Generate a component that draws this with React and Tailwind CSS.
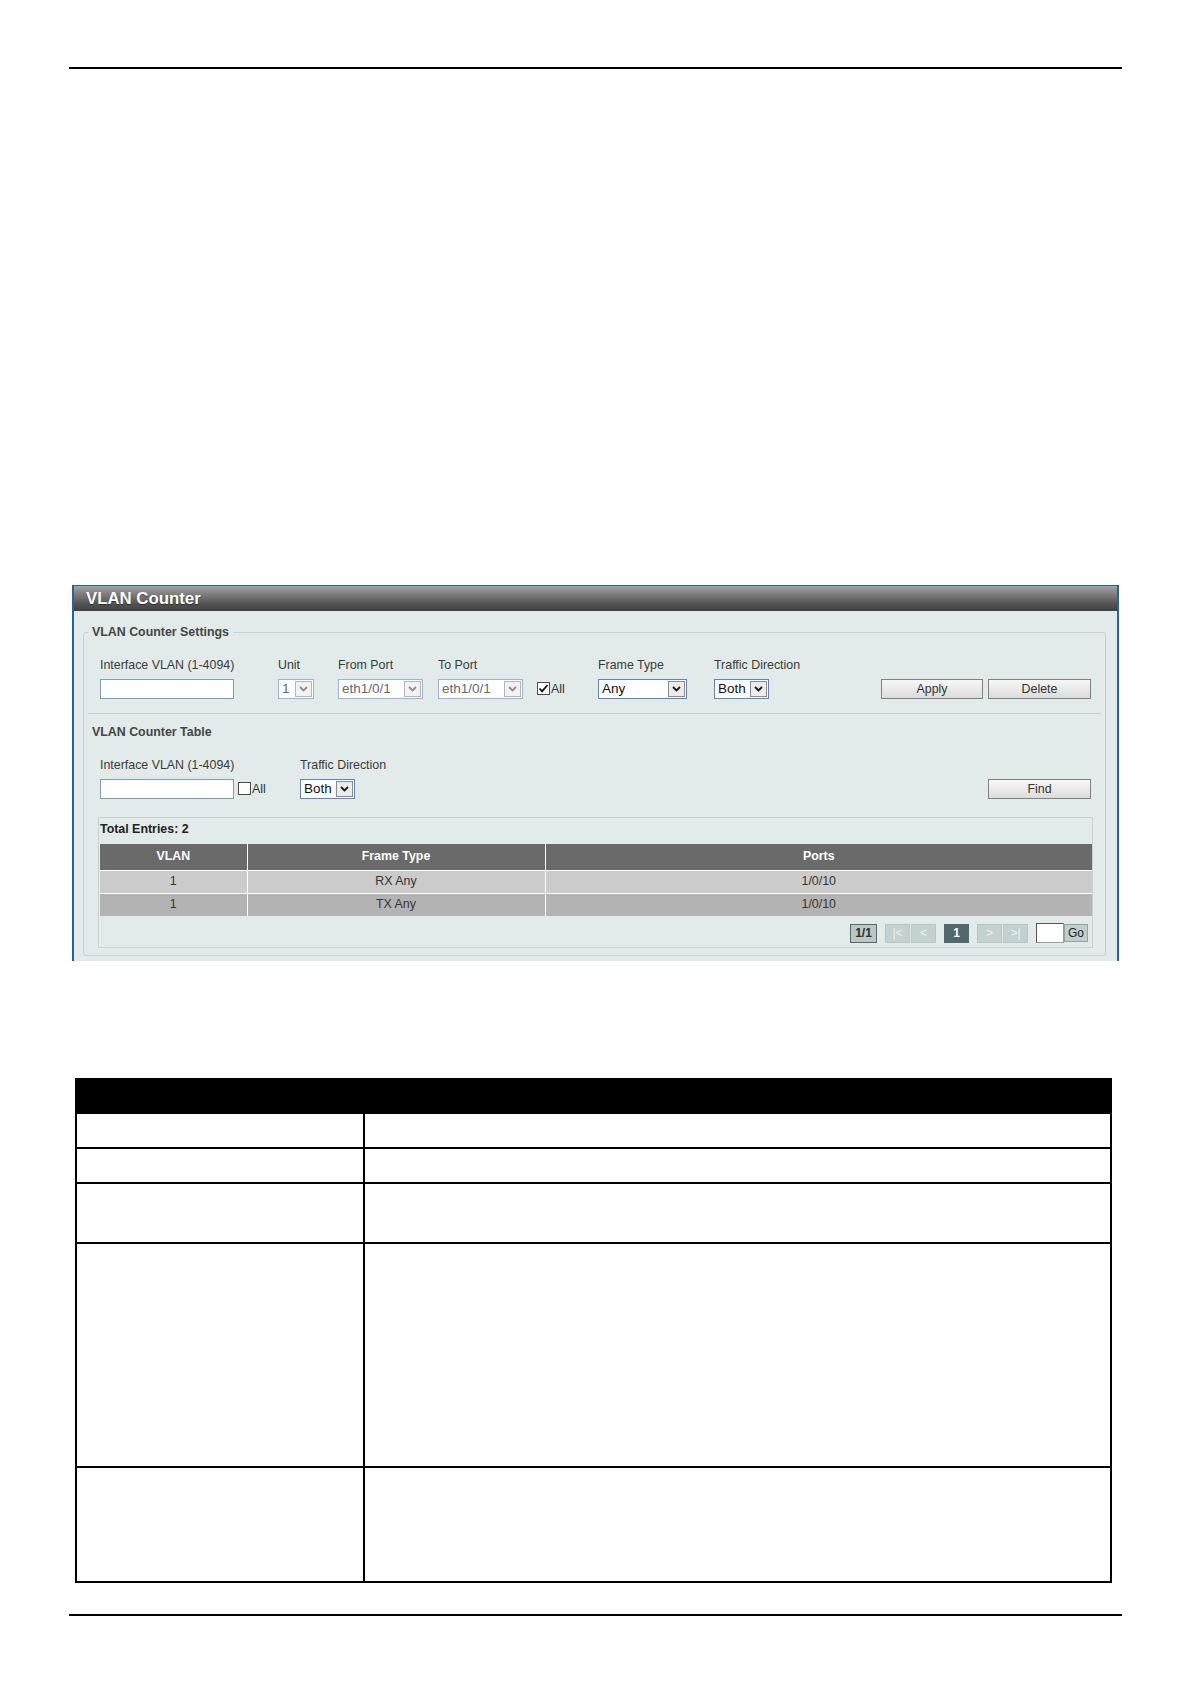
import React from 'react';

function Chevron({ muted = false }) {
  return (
    <svg width="9" height="6" viewBox="0 0 9 6" aria-hidden>
      <path d="M1 1l3.5 3.5L8 1" fill="none" stroke={muted ? '#8c8c8c' : '#1a1a1a'} strokeWidth="1.8" />
    </svg>
  );
}

function Select({ value, className = '', disabled = false }) {
  return (
    <div
      className={`flex h-[20px] items-center justify-between border bg-white pl-[3px] pr-[1px] text-[13.5px] ${
        disabled ? 'border-[#9db4d6] text-[#6a6a6a]' : 'border-[#5f84b8] text-[#111]'
      } ${className}`}
    >
      <span className="leading-none">{value}</span>
      <span
        className={`flex h-[16px] w-[17px] items-center justify-center border ${
          disabled ? 'border-[#b4b4b4] bg-[#f2f2f2]' : 'border-[#8a8a8a] bg-[#ececec]'
        }`}
      >
        <Chevron muted={disabled} />
      </span>
    </div>
  );
}

function Checkbox({ checked = false }) {
  return (
    <span className="flex items-center">
      <span className="flex h-[13px] w-[13px] items-center justify-center border border-[#4a4a4a] bg-white">
        {checked && (
          <svg width="11" height="11" viewBox="0 0 11 11" aria-hidden>
            <path d="M1.5 5.5l2.6 2.8L9.5 2" fill="none" stroke="#111" strokeWidth="1.8" />
          </svg>
        )}
      </span>
      <span className="ml-[1px] text-[12.4px] text-[#333]">All</span>
    </span>
  );
}

function Button({ children, className = '' }) {
  return (
    <button
      type="button"
      className={`h-[20px] border border-[#808080] bg-[linear-gradient(#f7f7f7,#dcdcdc)] text-[12.4px] text-[#333] ${className}`}
    >
      {children}
    </button>
  );
}

function TextInput({ className = '' }) {
  return <div className={`h-[20px] border border-[#7f9db9] bg-white ${className}`} />;
}

function Field({ label, children, className = '' }) {
  return (
    <div className={`flex flex-col ${className}`}>
      <span className="mb-[7px] whitespace-nowrap text-[12.4px] leading-[14px] text-[#3a3a3a]">{label}</span>
      <div className="flex items-center">{children}</div>
    </div>
  );
}

function PageBtn({ children, kind = 'off' }) {
  const styles = {
    off: 'w-[25px] bg-[#c3d1d1] text-[#eef3f3] border-[#b7c6c6]',
    on: 'w-[25px] bg-[#52686d] text-white font-bold border-[#52686d]',
    info: 'w-[27px] bg-[#b9c7c7] text-[#2e2e2e] font-bold border-[#55686a]',
  };
  return (
    <span
      className={`flex h-[19px] items-center justify-center border text-[12px] leading-none ${styles[kind]}`}
    >
      {children}
    </span>
  );
}

const rows = [
  { vlan: '1', frame: 'RX Any', ports: '1/0/10', bg: 'bg-[#cbcbcb]' },
  { vlan: '1', frame: 'TX Any', ports: '1/0/10', bg: 'bg-[#b3b3b3]' },
];

const docRows = ['h-[35px]', 'h-[35px]', 'h-[60px]', 'h-[224px]', 'h-[115px]'];

export default function App() {
  return (
    <div className="min-h-[1684px] bg-white font-['Liberation_Sans',Arial,sans-serif] text-[#333]">
      <div className="ml-[69px] w-[1053px] pt-[67px]">
        <div className="h-[2px] bg-black" />

        {/* VLAN Counter panel */}
        <section className="ml-[3px] mt-[516px] w-[1047px] border-x-2 border-t border-[#24639c]">
          <div className="flex h-[25px] items-center bg-[linear-gradient(#a4a4a4_0%,#808080_30%,#555555_70%,#3e3e3e_100%)] pl-[12px]">
            <h1 className="text-[16.8px] font-bold text-white [text-shadow:0_1px_1px_rgba(0,0,0,0.5)]">
              VLAN Counter
            </h1>
          </div>

          <div className="bg-[#e2eaea] pb-[5px] pl-[9px] pr-[11px] pt-[14px]">
            <fieldset className="rounded-[3px] border border-[#c7d2d2] pb-[7px] pl-[16px] pr-[14px]">
              <legend className="-ml-[12px] px-[4px] text-[12.4px] font-bold leading-[14px] text-[#454545]">
                VLAN Counter Settings
              </legend>

              <div className="flex items-end pt-[19px]">
                <Field label="Interface VLAN (1-4094)" className="w-[178px]">
                  <TextInput className="w-[134px]" />
                </Field>
                <Field label="Unit" className="w-[60px]">
                  <Select value="1" disabled className="w-[36px]" />
                </Field>
                <Field label="From Port" className="w-[100px]">
                  <Select value="eth1/0/1" disabled className="w-[85px]" />
                </Field>
                <Field label="To Port" className="w-[160px]">
                  <Select value="eth1/0/1" disabled className="w-[85px]" />
                  <span className="ml-[14px]">
                    <Checkbox checked />
                  </span>
                </Field>
                <Field label="Frame Type" className="w-[116px]">
                  <Select value="Any" className="w-[89px]" />
                </Field>
                <Field label="Traffic Direction" className="w-[55px]">
                  <Select value="Both" className="w-[55px]" />
                </Field>
                <div className="flex flex-1 justify-end gap-[5px]">
                  <Button className="w-[102px]">Apply</Button>
                  <Button className="w-[103px]">Delete</Button>
                </div>
              </div>

              <div className="-ml-[12px] -mr-[10px] mt-[14px] h-px bg-[#c7d2d2]" />

              <h2 className="-ml-[8px] mt-[11px] text-[12.4px] font-bold leading-[14px] text-[#454545]">
                VLAN Counter Table
              </h2>

              <div className="mt-[19px] flex items-end">
                <Field label="Interface VLAN (1-4094)" className="w-[200px]">
                  <TextInput className="w-[134px]" />
                  <span className="ml-[4px]">
                    <Checkbox />
                  </span>
                </Field>
                <Field label="Traffic Direction" className="w-[55px]">
                  <Select value="Both" className="w-[55px]" />
                </Field>
                <div className="flex flex-1 justify-end">
                  <Button className="w-[103px]">Find</Button>
                </div>
              </div>

              <div className="-mx-[2px] mt-[18px] border border-[#c7d2d2] pb-[4px] pl-[1px] pt-[4px]">
                <p className="mb-[8px] text-[12.4px] font-bold leading-[14px] text-[#222]">Total Entries: 2</p>
                <table className="w-[992px] border-collapse text-[12.4px]">
                  <thead>
                    <tr className="h-[26px] bg-[#6a6a6a] text-white">
                      <th className="w-[147px] border-r border-white font-bold">VLAN</th>
                      <th className="w-[298px] border-r border-white font-bold">Frame Type</th>
                      <th className="font-bold">Ports</th>
                    </tr>
                  </thead>
                  <tbody>
                    {rows.map((r, i) => (
                      <tr key={i} className={`h-[23px] border-t border-white text-[#333] ${r.bg}`}>
                        <td className="border-r border-white text-center">{r.vlan}</td>
                        <td className="border-r border-white text-center">{r.frame}</td>
                        <td className="text-center">{r.ports}</td>
                      </tr>
                    ))}
                  </tbody>
                </table>

                <div className="mt-[7px] flex items-center justify-end pr-[4px]">
                  <PageBtn kind="info">1/1</PageBtn>
                  <div className="ml-[8px] flex gap-[1px]">
                    <PageBtn>|&lt;</PageBtn>
                    <PageBtn>&lt;</PageBtn>
                  </div>
                  <div className="ml-[8px]">
                    <PageBtn kind="on">1</PageBtn>
                  </div>
                  <div className="ml-[8px] flex gap-[1px]">
                    <PageBtn>&gt;</PageBtn>
                    <PageBtn>&gt;|</PageBtn>
                  </div>
                  <div className="ml-[8px] h-[20px] w-[28px] border border-[#9a9a9a] border-l-[#555] border-t-[#555] bg-white" />
                  <span className="flex h-[18px] w-[24px] items-center justify-center border border-[#93a3a3] bg-[#c3cfcf] text-[12px] text-[#222]">
                    Go
                  </span>
                </div>
              </div>
            </fieldset>
          </div>
        </section>

        {/* Parameter description table */}
        <table className="ml-[6px] mt-[117px] w-[1037px] border-collapse">
          <thead>
            <tr className="h-[34px] bg-black">
              <th className="w-[288px] border-2 border-black" />
              <th className="border-2 border-black" />
            </tr>
          </thead>
          <tbody>
            {docRows.map((h, i) => (
              <tr key={i} className={h}>
                <td className="border-2 border-black" />
                <td className="border-2 border-black" />
              </tr>
            ))}
          </tbody>
        </table>

        <div className="mt-[31px] h-[2px] bg-black" />
      </div>
    </div>
  );
}
